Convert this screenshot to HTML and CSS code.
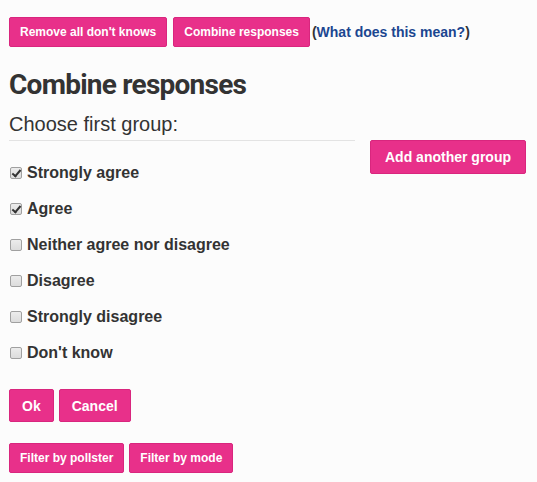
FILE: index.html
```html
<!DOCTYPE html>
<html>
<head>
<meta charset="utf-8">
<link rel="stylesheet" href="styles.css">
</head>
<body>
<div class="page">
  <div class="toolbar">
    <button class="btn btn-sm">Remove all don't knows</button>
    <button class="btn btn-sm">Combine responses</button>
    <span class="help">(<a href="#">What does this mean?</a>)</span>
  </div>
  <h1 class="title">Combine responses</h1>
  <div class="row">
    <div class="main">
      <h2 class="subtitle">Choose first group:</h2>
      <ul class="choices">
        <li><label><input type="checkbox" checked> Strongly agree</label></li>
        <li><label><input type="checkbox" checked> Agree</label></li>
        <li><label><input type="checkbox"> Neither agree nor disagree</label></li>
        <li><label><input type="checkbox"> Disagree</label></li>
        <li><label><input type="checkbox"> Strongly disagree</label></li>
        <li><label><input type="checkbox"> Don't know</label></li>
      </ul>
    </div>
    <div class="side">
      <button class="btn btn-add">Add another group</button>
    </div>
  </div>
  <div class="actions">
    <button class="btn">Ok</button>
    <button class="btn">Cancel</button>
  </div>
  <div class="filters">
    <button class="btn btn-sm">Filter by pollster</button>
    <button class="btn btn-sm">Filter by mode</button>
  </div>
</div>
</body>
</html>
```
FILE: styles.css
```css
html, body {
  margin: 0;
  padding: 0;
  background: #fcfcfc;
}
body {
  font-family: "Liberation Sans", Arial, sans-serif;
  color: #333;
}
.page {
  padding: 17px 9px 0 9px;
}
.btn {
  background: #e8308a;
  border: 1px solid #d9267e;
  border-radius: 2px;
  color: #fff;
  font-family: "Liberation Sans", Arial, sans-serif;
  font-weight: bold;
  font-size: 14px;
  height: 33px;
  padding: 0 12px;
  margin: 0;
  cursor: pointer;
}
.btn-add {
  padding: 0 14px;
  height: 34px;
}
.btn-sm {
  font-size: 12px;
  height: 30px;
  padding: 0 10px;
}
.toolbar {
  display: flex;
  align-items: center;
  gap: 6px;
}
.help {
  font-size: 14px;
  font-weight: bold;
  margin-left: -4px;
}
.help a {
  color: #1b4690;
  text-decoration: none;
}
.title {
  font-family: Roboto, sans-serif;
  font-weight: bold;
  font-size: 28px;
  margin: 22px 0 0 0;
  line-height: 32px;
  letter-spacing: -0.75px;
}
.row {
  display: flex;
  align-items: flex-start;
}
.main {
  width: 346px;
}
.side {
  margin-left: 15px;
  padding-top: 39px;
}
.subtitle {
  font-size: 20px;
  font-weight: normal;
  margin: 11px 0 0 0;
  line-height: 24px;
  padding-bottom: 4px;
  border-bottom: 1px solid #e3e3e3;
}
.choices {
  list-style: none;
  margin: 22px 0 0 0;
  padding: 0;
}
.choices li {
  height: 36px;
}
.choices label {
  display: flex;
  align-items: center;
  gap: 5px;
  font-size: 16px;
  font-weight: bold;
  line-height: 20px;
}
.choices input {
  appearance: none;
  -webkit-appearance: none;
  margin: 0 0 0 1px;
  width: 12px;
  height: 12px;
  border: 1px solid #a0a0a0;
  border-radius: 2px;
  background: linear-gradient(#ececec, #dcdcdc);
  position: relative;
  flex: none;
}
.choices input:checked::after {
  content: "";
  position: absolute;
  left: 3px;
  top: 0px;
  width: 3px;
  height: 7px;
  border: solid #333;
  border-width: 0 2px 2px 0;
  transform: rotate(40deg);
}
.actions {
  display: flex;
  gap: 5px;
  margin-top: 10px;
}
.filters {
  display: flex;
  gap: 5px;
  margin-top: 21px;
}
```
